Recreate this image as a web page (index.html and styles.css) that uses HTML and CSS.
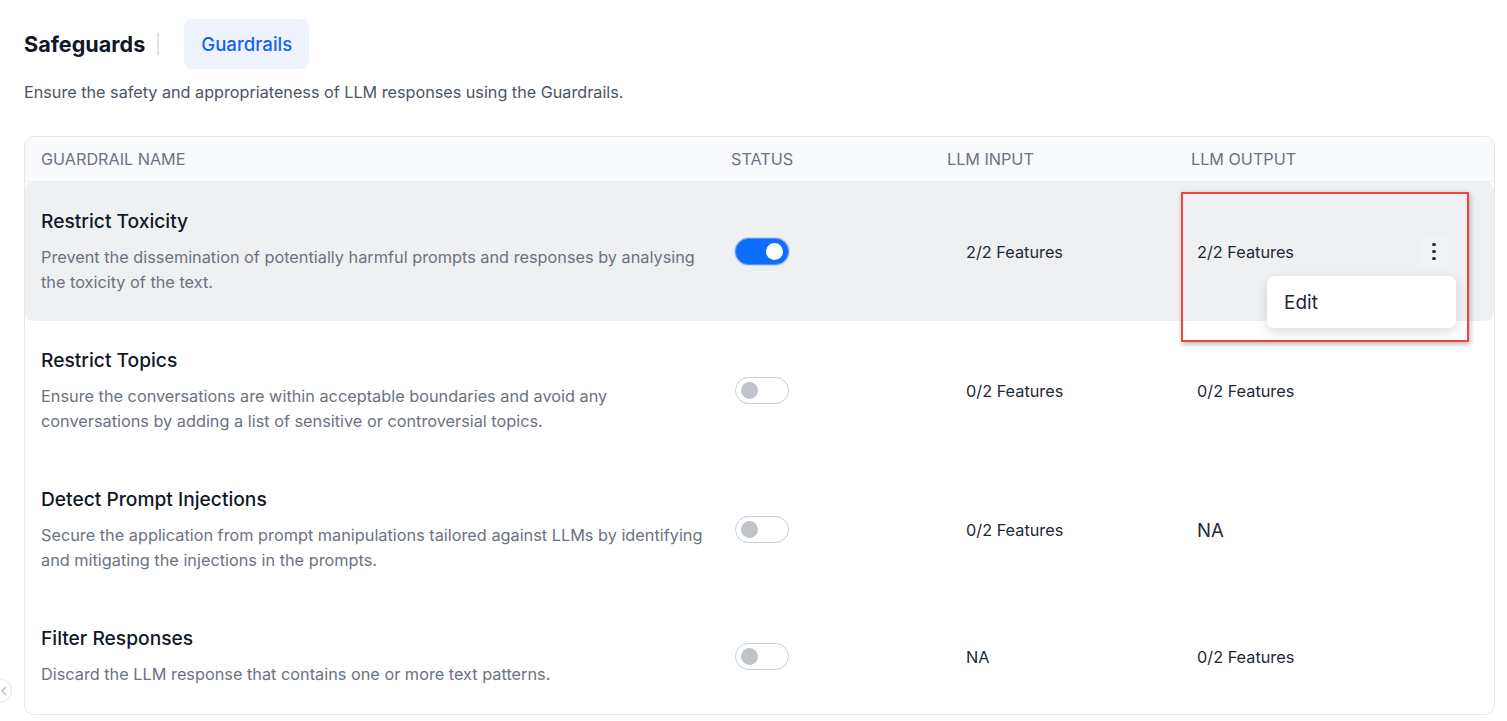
FILE: index.html
```html
<!DOCTYPE html>
<html lang="en">
<head>
<meta charset="utf-8">
<title>Safeguards - Guardrails</title>
<link rel="stylesheet" href="styles.css">
</head>
<body>
<div class="page">
  <div class="topbar">
    <h1 class="title">Safeguards</h1>
    <span class="divider"></span>
    <span class="tab">Guardrails</span>
  </div>
  <p class="subtitle">Ensure the safety and appropriateness of LLM responses using the Guardrails.</p>

  <div class="table">
    <div class="row head">
      <div class="cell">GUARDRAIL NAME</div>
      <div class="cell">STATUS</div>
      <div class="cell">LLM INPUT</div>
      <div class="cell">LLM OUTPUT</div>
    </div>

    <div class="row body hover">
      <div class="cell name">
        <div class="rname">Restrict Toxicity</div>
        <div class="rdesc">Prevent the dissemination of potentially harmful prompts and responses by analysing the toxicity of the text.</div>
      </div>
      <div class="cell status"><span class="switch on"><span class="knob"></span></span></div>
      <div class="cell input">2/2 Features</div>
      <div class="cell output">
        <span>2/2 Features</span>
        <span class="kebab"><i></i><i></i><i></i></span>
      </div>
      <div class="menu"><div class="menu-item">Edit</div></div>
    </div>

    <div class="row body">
      <div class="cell name">
        <div class="rname">Restrict Topics</div>
        <div class="rdesc">Ensure the conversations are within acceptable boundaries and avoid any conversations by adding a list of sensitive or controversial topics.</div>
      </div>
      <div class="cell status"><span class="switch"><span class="knob"></span></span></div>
      <div class="cell input">0/2 Features</div>
      <div class="cell output">0/2 Features</div>
    </div>

    <div class="row body">
      <div class="cell name">
        <div class="rname">Detect Prompt Injections</div>
        <div class="rdesc">Secure the application from prompt manipulations tailored against LLMs by identifying and mitigating the injections in the prompts.</div>
      </div>
      <div class="cell status"><span class="switch"><span class="knob"></span></span></div>
      <div class="cell input">0/2 Features</div>
      <div class="cell output na">NA</div>
    </div>

    <div class="row body last">
      <div class="cell name">
        <div class="rname">Filter Responses</div>
        <div class="rdesc">Discard the LLM response that contains one or more text patterns.</div>
      </div>
      <div class="cell status"><span class="switch"><span class="knob"></span></span></div>
      <div class="cell input">NA</div>
      <div class="cell output">0/2 Features</div>
    </div>
  </div>

  <div class="annot"></div>
  <div class="collapse">
    <svg width="8" height="10" viewBox="0 0 8 10"><path d="M6 1 L2 5 L6 9" fill="none" stroke="#b8bcc4" stroke-width="1.3"/></svg>
  </div>
</div>
</body>
</html>
```

FILE: styles.css
```css
* { box-sizing: border-box; }
html, body { margin: 0; padding: 0; background: #ffffff; }
body {
  font-family: Inter, "Noto Sans", "Liberation Sans", sans-serif;
  color: #1f2937;
  overflow: hidden;
}
.page {
  position: relative;
  width: 1507px;
  height: 721px;
  padding: 19px 12px 0 24px;
}
.topbar {
  display: flex;
  align-items: center;
  height: 50px;
}
.title {
  margin: 0;
  font-size: 21.6px;
  font-weight: 700;
  color: #111827;
}
.divider {
  width: 2px;
  height: 22px;
  background: #dfe2e7;
  margin: 0 25px 0 12px;
}
.tab {
  height: 50px;
  padding: 0 17px;
  display: flex;
  align-items: center;
  background: #eef3fe;
  border-radius: 8px;
  color: #1662ee;
  font-size: 18.6px;
  font-weight: 500;
}
.subtitle {
  margin: 12px 0 0 0;
  height: 22px;
  line-height: 22px;
  font-size: 16.2px;
  color: #4b5563;
}
.table {
  margin-top: 33px;
  width: 1471px;
  border: 1px solid #e5e7eb;
  border-radius: 10px;
}
.row {
  position: relative;
  display: grid;
  grid-template-columns: 690px 216px 244px 1fr;
  padding-left: 16px;
}
.row.head {
  height: 45px;
  align-items: center;
  background: #f9fafb;
  border-bottom: 1px solid #eceef1;
  border-radius: 10px 10px 0 0;
  font-size: 16.2px;
  color: #6b7280;
}
.row.body {
  height: 139px;
  align-items: center;
}
.row.body.last { height: 115px; border-radius: 0 0 10px 10px; }
.row.hover {
  background: #eff0f2;
  border-radius: 8px;
}
.cell.name { padding-right: 20px; }
.rname {
  font-size: 19.2px;
  font-weight: 500;
  color: #111827;
  line-height: 25px;
}
.rdesc {
  margin-top: 11px;
  font-size: 16.3px;
  line-height: 24.5px;
  color: #6b7280;
}
.cell.status { padding-left: 4px; display: flex; align-items: center; }
.switch {
  position: relative;
  width: 54px;
  height: 27px;
  border-radius: 14px;
  border: 1px solid #c9cdd3;
  background: #ffffff;
  display: block;
}
.switch .knob {
  position: absolute;
  left: 5px;
  top: 4px;
  width: 17px;
  height: 17px;
  border-radius: 50%;
  background: #bfc3ca;
}
.switch.on {
  background: #0d6efd;
  border-color: #5c8fe8;
  box-shadow: 0 0 0 1px rgba(13,110,253,0.18);
}
.switch.on .knob {
  left: auto;
  right: 5px;
  background: #ffffff;
}
.cell.input { padding-left: 19px; font-size: 16.3px; color: #1f2937; }
.cell.output {
  padding-left: 6px;
  font-size: 16.3px;
  color: #1f2937;
  display: flex;
  align-items: center;
}
.cell.output.na { font-size: 18.6px; }
.kebab {
  margin-left: auto;
  margin-right: 45px;
  width: 30px;
  height: 34px;
  border-radius: 4px;
  background: #f1f2f4;
  display: flex;
  flex-direction: column;
  align-items: center;
  justify-content: center;
  gap: 3.5px;
}
.kebab i {
  display: block;
  width: 3.5px;
  height: 3.5px;
  border-radius: 50%;
  background: #2b2f36;
}
.menu {
  position: absolute;
  left: 1242px;
  top: 94px;
  width: 189px;
  height: 52px;
  background: #ffffff;
  border-radius: 7px;
  box-shadow: 0 4px 12px rgba(0,0,0,0.14);
  display: flex;
  align-items: center;
  z-index: 3;
}
.menu-item {
  padding-left: 17px;
  font-size: 19px;
  color: #1f2937;
}
.annot {
  position: absolute;
  left: 1181px;
  top: 192px;
  width: 288px;
  height: 150px;
  border: 2.5px solid #ef4444;
  box-shadow: 1px 2px 5px rgba(0,0,0,0.3);
  z-index: 4;
}
.collapse {
  position: absolute;
  left: -13px;
  top: 678px;
  width: 25px;
  height: 25px;
  border-radius: 50%;
  border: 1px solid #e3e5e9;
  background: #ffffff;
  display: flex;
  align-items: center;
  justify-content: flex-end;
  padding-right: 3px;
}
```
